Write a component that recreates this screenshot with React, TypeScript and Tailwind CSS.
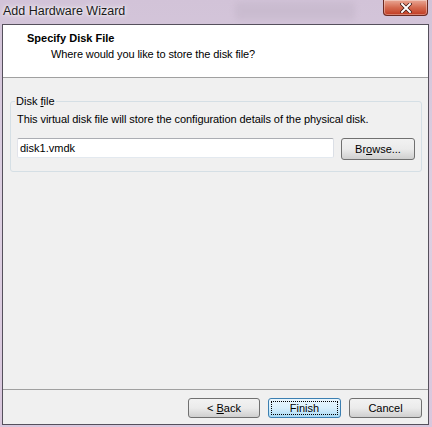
import React from "react";

const WinButton: React.FC<{ children: React.ReactNode; primary?: boolean; className?: string }> = ({
  children,
  primary,
  className = "",
}) => (
  <button
    className={
      "h-[20px] rounded-[3px] border text-[11px] leading-none text-black " +
      (primary
        ? "border-[#3c7fb1] bg-gradient-to-b from-[#eaf6fd] via-[#d9f0fc] to-[#a7d9f5] p-[2px] "
        : "border-[#707070] bg-gradient-to-b from-[#f2f2f2] via-[#ebebeb] to-[#cfcfcf] ") +
      className
    }
  >
    {primary ? (
      <span className="flex h-full w-full items-center justify-center border border-dotted border-black">
        {children}
      </span>
    ) : (
      children
    )}
  </button>
);

export default function App() {
  return (
    <div
      className="relative h-[427px] w-[432px] overflow-hidden bg-gradient-to-b from-[#d2c3d8] via-[#ddd0e2] to-[#d9c7dd]"
      style={{ fontFamily: '"Liberation Sans", Arial, sans-serif' }}
    >
      {/* title bar */}
      <div className="flex h-[24px] items-center pl-[3px] pb-[2px] text-[12.5px] text-[#1a1a1a] [text-shadow:0_0_6px_#ffffff,0_0_3px_#ffffff]">
        Add Hardware Wizard
      </div>
      <div className="absolute left-[235px] top-[2px] h-[18px] w-[120px] rounded-[4px] bg-[#c4b6ca] opacity-60 blur-[3px]" />
      <button className="absolute right-[4px] top-0 flex h-[16px] w-[45px] items-center justify-center rounded-b-[4px] border border-t-0 border-[#6b2a22] bg-gradient-to-b from-[#e9a795] via-[#d46a50] to-[#c0381e] shadow-[inset_0_0_0_1px_rgba(255,255,255,0.35)]">
        <svg width="12" height="10" viewBox="0 0 12 10">
          <path d="M2 1 L10 9 M10 1 L2 9" stroke="#3b1410" strokeWidth="3.4" strokeLinecap="square" />
          <path d="M2 1 L10 9 M10 1 L2 9" stroke="#ffffff" strokeWidth="2" strokeLinecap="square" />
        </svg>
      </button>

      {/* client area */}
      <div className="relative ml-[2px] flex h-[401px] w-[427px] flex-col border border-[#55505c] bg-[#f0f0f0]">
        <div className="h-[53px] border-b border-[#a0a0a0] bg-white pl-[24px] pt-[7px] text-[11px] leading-[13px] tracking-[-0.1px]">
          <div className="font-bold text-black tracking-normal">Specify Disk File</div>
          <div className="mt-[3px] pl-[24px] text-black">Where would you like to store the disk file?</div>
        </div>

        <div className="flex-1 pl-[7px] pr-[6px] pt-[17px]">
          <fieldset className="rounded-[3px] border border-[#d5dfe5] px-[6px] pb-[11px] text-[11px] leading-[13px] text-black">
            <legend className="ml-[-2px] px-[1px]">
              Disk <span className="underline">f</span>ile
            </legend>
            <div className="mt-[5px] tracking-[-0.07px]">
              This virtual disk file will store the configuration details of the physical disk.
            </div>
            <div className="mt-[12px] flex items-start gap-[7px]">
              <div className="flex h-[20px] flex-1 items-center rounded-[2px] border border-[#abadb3] border-b-[#e3e9ef] border-l-[#e2e3ea] border-r-[#dbdfe6] bg-white pl-[2px]">
                disk1.vmdk
              </div>
              <WinButton className="h-[22px] w-[74px]">
                Br<span className="underline">o</span>wse...
              </WinButton>
            </div>
          </fieldset>
        </div>

        <div className="flex h-[35px] justify-end gap-[8px] border-t border-[#a0a0a0] pr-[6px] pt-[8px]">
          <WinButton className="w-[72px]">
            &lt; <span className="underline">B</span>ack
          </WinButton>
          <WinButton primary className="w-[73px]">
            Finish
          </WinButton>
          <WinButton className="w-[73px]">Cancel</WinButton>
        </div>
      </div>
    </div>
  );
}
